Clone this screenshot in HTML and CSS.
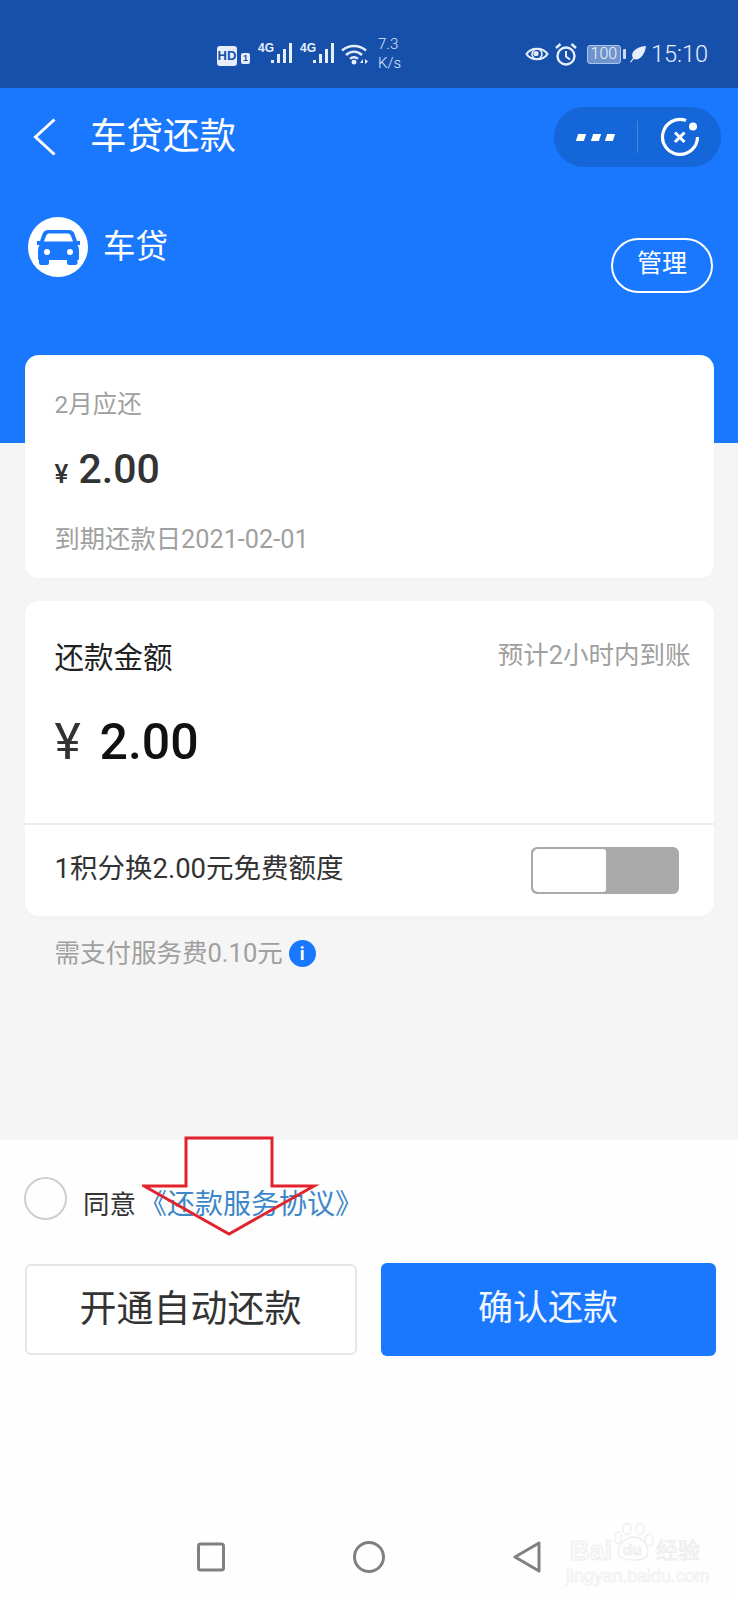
FILE: index.html
```html
<!DOCTYPE html>
<html lang="zh-CN">
<head>
<meta charset="utf-8">
<title>车贷还款</title>
<link rel="stylesheet" href="styles.css">
</head>
<body>
<div class="page">
  <header class="status">
    <div class="status-left">
      <span class="hd">HD</span>
      <span class="sim">1</span>
      <span class="signal"><span class="net">4G</span>
        <svg width="22" height="21" viewBox="0 0 22 21"><g fill="#e6eefb"><rect x="0" y="17" width="3" height="3"/><rect x="6" y="11" width="3" height="9"/><rect x="12" y="6" width="3" height="14"/><rect x="18" y="0" width="3" height="20"/></g></svg>
      </span>
      <span class="signal"><span class="net">4G</span>
        <svg width="22" height="21" viewBox="0 0 22 21"><g fill="#e6eefb"><rect x="0" y="17" width="3" height="3"/><rect x="6" y="11" width="3" height="9"/><rect x="12" y="6" width="3" height="14"/><rect x="18" y="0" width="3" height="20"/></g></svg>
      </span>
      <svg class="wifi" width="30" height="21" viewBox="0 0 30 21"><g fill="none" stroke="#e6eefb" stroke-width="2.4"><path d="M1 6.5C8 .5 18 .5 25 6.5"/><path d="M5 11C10 6.6 16 6.6 21 11"/><path d="M9 14.8C11.6 12.8 14.4 12.8 17 14.8"/></g><circle cx="13" cy="18.2" r="2.4" fill="#e6eefb"/><path d="M19 19l3-4v4zM24 15l3 2.500-3 2.500zM28 15v5" fill="#e6eefb"/></svg>
      <span class="speed">7.3<br>K/s</span>
    </div>
    <div class="status-right">
      <svg width="24" height="18" viewBox="0 0 24 18"><path d="M1.500 9C6 2 18 2 22.500 9C18 16 6 16 1.500 9Z" fill="none" stroke="#e6eefb" stroke-width="2.200"/><circle cx="12" cy="9" r="5" fill="none" stroke="#e6eefb" stroke-width="1.600"/><circle cx="11" cy="8.500" r="2.600" fill="#e6eefb"/></svg>
      <svg width="22" height="23" viewBox="0 0 22 23"><circle cx="11" cy="13" r="8.500" fill="none" stroke="#e6eefb" stroke-width="2.400"/><path d="M11 8v5.500l4 3" fill="none" stroke="#e6eefb" stroke-width="2"/><path d="M1 5L5.500 1M21 5L16.500 1" stroke="#e6eefb" stroke-width="2.400" fill="none"/></svg>
      <span class="battery"><span class="battery-num">100</span></span>
      <span class="battery-tip"></span>
      <svg class="leaf" width="17" height="18" viewBox="0 0 17 18"><path d="M1 17C2 16 3 14 4 13C1 8 6 2 17 1C16 10 10 16 5 14C3.500 15 2.500 17 2 17.500Z" fill="#e6eefb"/></svg>
      <span class="clock">15:10</span>
    </div>
  </header>

  <section class="hero">
    <div class="topbar">
      <svg width="24" height="38" viewBox="0 0 24 38"><path d="M21.500 1.500L2.500 19L21.500 36.500" fill="none" stroke="#fff" stroke-width="3"/></svg>
      <h1 class="title">车贷还款</h1>
      <div class="capsule">
        <span class="more"><i></i><i></i><i></i></span>
        <span class="capsule-line"></span>
        <svg width="40" height="40" viewBox="0 0 40 40"><path d="M26 3.500A17.500 17.500 0 1 0 37.500 20" fill="none" stroke="#fff" stroke-width="3.200"/><circle cx="33" cy="9.500" r="4" fill="#fff"/><path d="M15 15.500l9.500 9.500M24.500 15.500l-9.500 9.500" stroke="#fff" stroke-width="3"/></svg>
      </div>
    </div>
    <div class="loan">
      <span class="loan-icon">
        <svg width="60" height="60" viewBox="0 0 60 60"><circle cx="30" cy="30" r="30" fill="#fff"/><path fill="#1a78ff" fill-rule="evenodd" d="M20 13H41Q45 13 46.500 17L49 24H52V28H49.500Q51 30 51 33V42Q51 43 49.500 43V46Q49.500 48 47.500 48H41Q39 48 39 46V43H21V46Q21 48 19 48H13Q11 48 11 46V43Q10 43 10 42V33Q10 30 11.500 28H9V24H12L14.500 17Q16 13 20 13ZM20.500 16.500H40.500Q42 16.500 43 19L45 24.500H16L18 19Q19 16.500 20.500 16.500Z"/><circle cx="19" cy="35" r="3" fill="#fff"/><circle cx="42" cy="35" r="3" fill="#fff"/></svg>
      </span>
      <span class="loan-name">车贷</span>
      <span class="manage">管理</span>
    </div>
  </section>

  <main class="content">
    <div class="cards">
      <section class="card card-due">
        <div class="due-label">2月应还</div>
        <div class="due-amount"><span class="due-yen">¥</span><span class="due-num">2.00</span></div>
        <div class="due-date">到期还款日2021-02-01</div>
      </section>
      <section class="card card-pay">
        <div class="pay-head"><span class="pay-title">还款金额</span><span class="pay-hint">预计2小时内到账</span></div>
        <div class="pay-amount"><span class="pay-yen">¥</span><span class="pay-num">2.00</span></div>
        <div class="pay-points">
          <span class="points-text">1积分换2.00元免费额度</span>
          <span class="toggle"><span class="toggle-knob"></span></span>
        </div>
      </section>
      <div class="fee"><span>需支付服务费0.10元</span><span class="info">i</span></div>
    </div>
  </main>

  <footer class="footer">
    <div class="agree">
      <span class="radio"></span>
      <span class="agree-text">同意</span>
      <span class="agree-link">《还款服务协议》</span>
      <svg class="arrow" width="180" height="104" viewBox="0 0 180 104"><path d="M44 2H130V50H172L87 98L2 50H44Z" fill="none" stroke="#e1232e" stroke-width="3"/></svg>
    </div>
    <div class="actions">
      <button class="btn btn-auto">开通自动还款</button>
      <button class="btn btn-ok">确认还款</button>
    </div>
    <nav class="navbar">
      <svg width="28" height="30" viewBox="0 0 28 30"><rect x="1.500" y="2" width="25" height="26" rx="2" fill="none" stroke="#808080" stroke-width="3"/></svg>
      <svg width="32" height="32" viewBox="0 0 32 32"><circle cx="16" cy="16" r="14.500" fill="none" stroke="#808080" stroke-width="3"/></svg>
      <svg width="28" height="32" viewBox="0 0 28 32"><path d="M26 2V30L2 16Z" fill="none" stroke="#808080" stroke-width="3" stroke-linejoin="round"/></svg>
    </nav>
    <div class="watermark">
      <div class="wm-top">
        <span class="wm-bai">Bai</span>
        <svg class="wm-paw" width="44" height="40" viewBox="0 0 44 40"><g fill="none" stroke="#eeeeee" stroke-width="1.300"><ellipse cx="4" cy="15" rx="3.500" ry="6"/><ellipse cx="13" cy="6" rx="4" ry="5.500"/><ellipse cx="26" cy="6" rx="4" ry="5.500"/><ellipse cx="35" cy="17" rx="4" ry="6"/><path d="M4 28C6 18 14 14 20 14C27 14 33 20 34 28C35 35 28 37 20 37C11 37 3 35 4 28Z"/></g><text x="9" y="32" class="wm-du">du</text></svg>
        <span class="wm-jy">经验</span>
      </div>
      <div class="wm-url">jingyan.baidu.com</div>
    </div>
  </footer>
</div>
</body>
</html>
```

FILE: styles.css
```css
* { box-sizing: border-box; }
html, body { margin: 0; padding: 0; background: #fff; }
body { font-family: Roboto, "Noto Sans CJK SC", sans-serif; }
.page { width: 738px; height: 1600px; display: flex; flex-direction: column; overflow: hidden; }

/* status bar */
.status { height: 88px; flex: none; background: #1650ab; color: #e6eefb; display: flex; justify-content: space-between; padding: 38px 30px 0 217px; }
.status-left, .status-right { display: flex; align-items: center; height: 32px; }
.hd { width: 20px; height: 20px; margin-top: 4px; border-radius: 3px; background: #e6eefb; color: #1650ab; font: bold 13px/20px "Liberation Sans Narrow", "Liberation Sans", sans-serif; text-align: center; }
.sim { width: 9px; height: 11px; margin: 9px 0 0 4px; border-radius: 2px; background: #e6eefb; color: #1650ab; font: bold 9px/11px "Liberation Sans", sans-serif; text-align: center; }
.signal { display: flex; align-items: flex-start; width: 35px; margin-left: 8px; height: 22px; }
.signal + .signal { margin-left: 7px; }
.net { width: 13px; font: bold 12px/11px "Liberation Sans Narrow", "Liberation Sans", sans-serif; }
.wifi { margin-left: 6px; }
.speed { margin-left: 7px; font-size: 15px; line-height: 19px; font-weight: 300; color: #dfe8f7; }
.status-right svg { flex: none; }
.status-right svg + svg { margin-left: 6px; }
.battery { width: 34px; height: 19px; margin-left: 10px; border: 1.500px solid #a9c6ee; border-radius: 3px; background: #6f94cd; display: flex; align-items: center; justify-content: center; }
.battery-num { font-size: 16px; line-height: 16px; font-weight: 300; color: #eef3fb; }
.battery-tip { width: 3px; height: 10px; margin-left: 2px; background: #cfddf3; border-radius: 1px; }
.leaf { margin-left: 3px; }
.clock { margin-left: 5px; font-size: 23.500px; font-weight: 300; line-height: 32px; }

/* blue header */
.hero { height: 355px; flex: none; background: #1a78ff; color: #fff; padding-top: 19px; }
.topbar { display: flex; align-items: center; height: 60px; padding: 0 17px 0 33px; }
.title { margin: 0 0 0 33px; font-size: 36.500px; line-height: 44px; font-weight: 400; }
.capsule { margin-left: auto; width: 167px; height: 60px; border-radius: 30px; background: #1566d9; display: flex; align-items: center; padding-left: 23px; }
.more { display: flex; gap: 7px; width: 37px; }
.more i { width: 7.500px; height: 7px; background: #fff; transform: skewX(-18deg); }
.capsule-line { width: 1px; height: 32px; margin: 0 23px 0 23px; background: rgba(255,255,255,.22); }
.capsule svg { margin-left: -1px; }
.loan { display: flex; align-items: flex-start; margin-top: 50px; padding: 0 25px 0 28px; }
.loan-icon { width: 60px; height: 60px; }
.loan-icon svg { display: block; }
.loan-name { margin-left: 15px; font-size: 32.500px; line-height: 60px; }
.manage { margin: 21px 0 0 auto; width: 102px; height: 55px; border: 2px solid #fff; border-radius: 28px; font-size: 25px; line-height: 47px; text-align: center; }

/* grey area */
.content { height: 697px; flex: none; background: #f5f5f5; display: flow-root; }
.cards { margin-top: -88px; padding: 0 24.500px; }
.card { background: #fff; border-radius: 14px; box-shadow: 0 1px 6px rgba(0,0,0,.02); }
.card-due { height: 223px; padding: 33px 30px 0; }
.due-label { font-size: 24.500px; line-height: 34px; color: #a0a0a0; }
.due-amount { display: flex; align-items: baseline; margin-top: 22px; height: 50px; line-height: 50px; color: #333; }
.due-yen { font-size: 26px; font-weight: 500; width: 24px; }
.due-num { font-size: 41px; font-weight: 500; }
.due-date { margin-top: 29px; font-size: 25.300px; line-height: 34px; color: #a0a0a0; }

.card-pay { height: 315px; margin-top: 23px; padding-top: 37px; }
.pay-head { display: flex; justify-content: space-between; padding: 0 23px 0 30px; height: 40px; }
.pay-title { font-size: 29.500px; line-height: 40px; color: #222; }
.pay-hint { font-size: 25.500px; line-height: 34px; color: #a0a0a0; }
.pay-amount { display: flex; align-items: baseline; margin-top: 34px; padding: 0 30px; height: 60px; line-height: 60px; color: #111; }
.pay-yen { font-size: 50px; color: #333; width: 45px; }
.pay-num { font-size: 50px; font-weight: 500; }
.pay-points { display: flex; align-items: center; justify-content: space-between; margin: 51px 0 0; height: 93px; padding: 0 35px 0 30px; border-top: 2px solid #ececec; }
.points-text { font-size: 27.500px; line-height: 36px; color: #333; margin-top: -3px; }
.toggle { width: 148px; height: 47px; margin-top: -1px; background: #aaa; border-radius: 6px; display: block; padding: 2px 0 2px 2px; }
.toggle-knob { display: block; width: 73px; height: 43px; background: #fff; border-radius: 5px 3px 3px 5px; }

.fee { display: flex; align-items: center; margin-top: 20px; padding-left: 30px; font-size: 25.500px; line-height: 34px; color: #a0a0a0; }
.info { width: 27px; height: 27px; margin-left: 6px; border-radius: 50%; background: #1a78ff; color: #fff; font-size: 18px; font-weight: 700; line-height: 27px; text-align: center; }

/* white footer */
.footer { position: relative; flex: 1; background: #fefefe; display: flex; flex-direction: column; }
.agree { position: relative; display: flex; align-items: center; padding: 37px 0 0 24px; height: 80px; }
.radio { width: 43px; height: 43px; border: 2px solid #cfcfcf; border-radius: 50%; }
.agree-text { margin-left: 16px; font-size: 26.500px; line-height: 36px; color: #333; margin-top: 12px; }
.agree-link { margin-left: 3px; font-size: 28px; line-height: 36px; color: #3d87c9; margin-top: 12px; }
.arrow { position: absolute; left: 142px; top: -4px; }
.actions { display: flex; align-items: center; gap: 24px; margin-top: 43px; padding-left: 24.500px; }
.btn { font-family: inherit; font-weight: 400; border-radius: 6px; padding: 0; }
.btn-auto { width: 332px; height: 91px; background: #fff; border: 2px solid #e6e6e6; color: #333; font-size: 37px; padding-bottom: 8px; }
.btn-ok { width: 335px; height: 93px; background: #1a78ff; border: 0; color: #f2f7ff; font-size: 35px; padding-bottom: 10px; }
.navbar { margin-top: auto; margin-bottom: 27px; padding-left: 197px; display: flex; align-items: center; height: 32px; gap: 128px; }
.watermark { position: absolute; left: 566px; top: 383px; width: 136px; }
.wm-top { display: flex; align-items: flex-end; height: 40px; }
.wm-bai { font: bold 27px/24px "Liberation Sans", sans-serif; color: #fbfbfb; -webkit-text-stroke: 1px #eeeeee; margin-left: 4px; width: 44px; }
.wm-paw { flex: none; }
.wm-du { font: bold 15px "Liberation Sans", sans-serif; fill: #f8f8f8; stroke: #e8e8e8; stroke-width: .6px; }
.wm-jy { font-size: 22px; line-height: 24px; color: #fbfbfb; -webkit-text-stroke: 1px #eeeeee; white-space: nowrap; margin-left: -2px; }
.wm-url { margin-top: 3px; font: 17.800px/20px "Liberation Sans", sans-serif; color: #fbfbfb; -webkit-text-stroke: .7px #efefef; white-space: nowrap; }
```
